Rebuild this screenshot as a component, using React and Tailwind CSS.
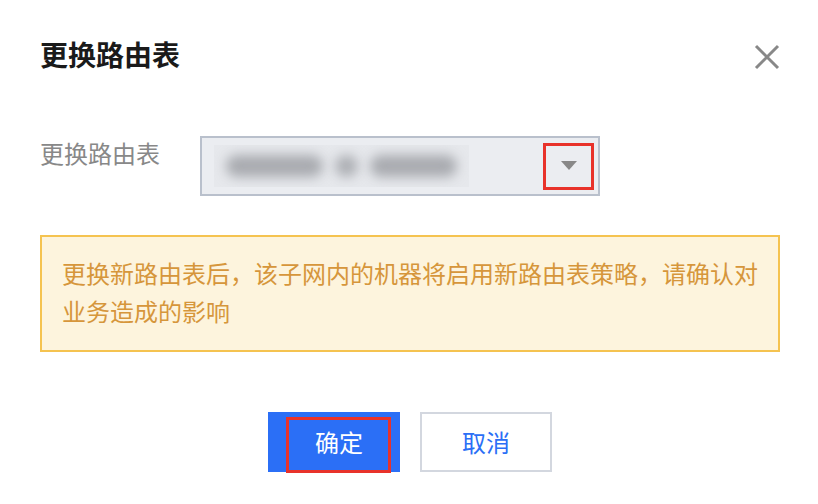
import React from 'react';

const font = { fontFamily: '"Noto Sans CJK SC", "Noto Sans", sans-serif' };

function CloseIcon() {
  return (
    <svg width="26" height="26" viewBox="0 0 26 26" className="text-[#888888]">
      <path d="M2 2 L24 24 M24 2 L2 24" stroke="currentColor" strokeWidth="3" />
    </svg>
  );
}

export default function App() {
  return (
    <div className="w-[818px] h-[504px] bg-white pl-10 pr-[38px] pt-[34px] relative" style={font}>
      {/* Header */}
      <div className="flex items-center justify-between">
        <h1 className="text-[28px] leading-[40px] font-bold text-[#1a1a1a]">更换路由表</h1>
        <button className="mr-[0px] mt-[6px]">
          <CloseIcon />
        </button>
      </div>

      {/* Form row */}
      <div className="flex mt-[62px]">
        <label className="w-[160px] text-[24px] leading-[34px] text-[#888888]">更换路由表</label>
        <div className="w-[400px] h-[60px] border-2 border-[#b9c0cc] bg-[#ebedf1] flex items-center pl-3 relative">
          <div className="w-[255px] h-[42px] bg-[#e6e8ec] overflow-hidden flex items-center px-3 gap-3">
            <div className="h-[22px] w-[100px] rounded-full bg-[#a9abb0] blur-[6px]" />
            <div className="h-[22px] w-[24px] rounded-full bg-[#adafb4] blur-[6px]" />
            <div className="h-[22px] w-[90px] rounded-full bg-[#a9abb0] blur-[6px]" />
          </div>
          <div className="ml-auto w-[51px] h-[47px] border-[3px] border-[#e8322a] flex items-center justify-center mr-[4px]">
            <svg width="16" height="10" viewBox="0 0 16 10">
              <path d="M0 0 H16 L8 9 Z" fill="#888888" />
            </svg>
          </div>
        </div>
      </div>

      {/* Warning */}
      <div className="mt-[39px] border-2 border-[#f5c350] bg-[#fdf4dd] pl-5 pr-2 pt-[17px] pb-[20px]">
        <p className="text-[24px] leading-[38px] text-[#d6963b]">
          更换新路由表后，该子网内的机器将启用新路由表策略，请确认对业务造成的影响
        </p>
      </div>

      {/* Actions */}
      <div className="flex justify-center gap-5 mt-[60px]">
        <div className="relative">
          <button className="w-[132px] h-[60px] bg-[#2b6ff6] text-white text-[24px] pl-[10px]">确定</button>
          <div className="absolute left-[18px] top-[5px] w-[105px] h-[56px] border-[3px] border-[#e8322a] pointer-events-none" />
        </div>
        <button className="w-[132px] h-[60px] border-2 border-[#d3d7df] bg-white text-[#2b6ff6] text-[24px]">取消</button>
      </div>
    </div>
  );
}
